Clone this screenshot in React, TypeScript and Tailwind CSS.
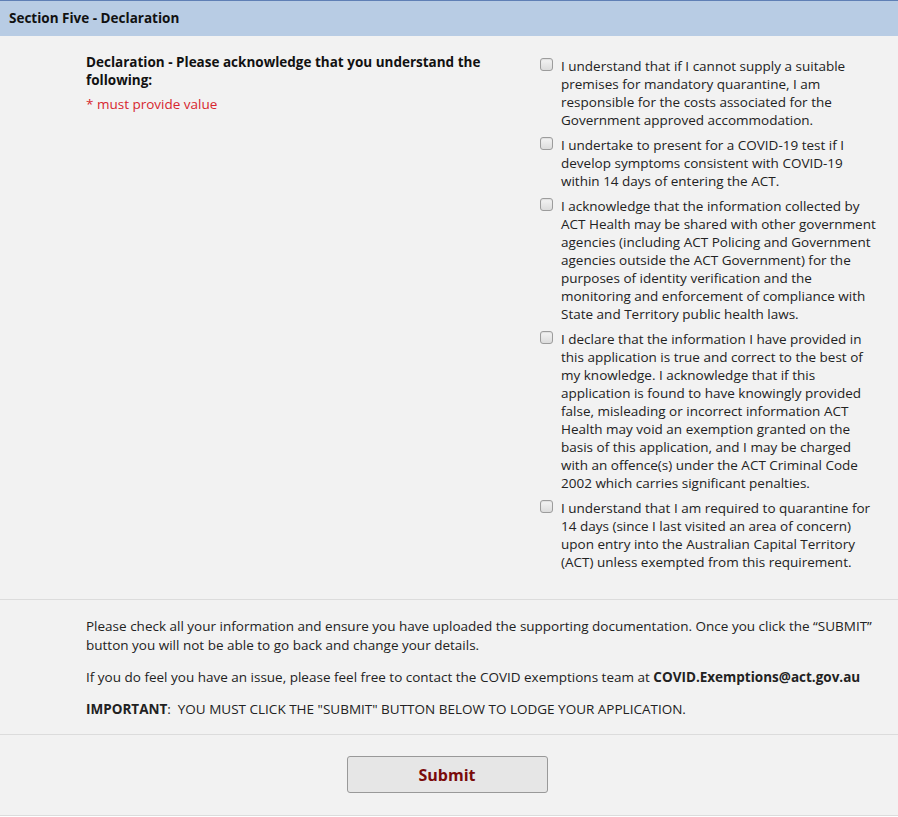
import React from "react";

const items = [
  "I understand that if I cannot supply a suitable premises for mandatory quarantine, I am responsible for the costs associated for the Government approved accommodation.",
  "I undertake to present for a COVID-19 test if I develop symptoms consistent with COVID-19 within 14 days of entering the ACT.",
  "I acknowledge that the information collected by ACT Health may be shared with other government agencies (including ACT Policing and Government agencies outside the ACT Government) for the purposes of identity verification and the monitoring and enforcement of compliance with State and Territory public health laws.",
  "I declare that the information I have provided in this application is true and correct to the best of my knowledge. I acknowledge that if this application is found to have knowingly provided false, misleading or incorrect information ACT Health may void an exemption granted on the basis of this application, and I may be charged with an offence(s) under the ACT Criminal Code 2002 which carries significant penalties.",
  "I understand that I am required to quarantine for 14 days (since I last visited an area of concern) upon entry into the Australian Capital Territory (ACT) unless exempted from this requirement.",
];

export default function App() {
  return (
    <div className="w-[898px] bg-[#f2f2f2] text-[13.5px] text-[#222] font-['Open_Sans',sans-serif]">
      {/* SECTION HEADER */}
      <div className="h-[36px] border-t border-[#5f7fb5] bg-[#b8cce4] px-[9px] flex items-center font-bold text-[#111]">
        Section Five - Declaration
      </div>

      {/* DECLARATION ROW */}
      <div className="flex pl-[86px] pr-[18px] pt-[17px] pb-[21px]">
        <div className="w-[454px] pr-[20px]">
          <div className="font-bold text-[#111] leading-[18px]">Declaration - Please acknowledge that you understand the following:</div>
          <div className="text-[#d7262e] leading-[18px] mt-[6px]">* must provide value</div>
        </div>
        <div className="flex-1 pt-[4px]">
          {items.map((text, i) => (
            <label key={i} className="flex items-start mb-[7px]">
              <input
                type="checkbox"
                className="appearance-none shrink-0 w-[13px] h-[13px] mt-[1px] rounded-[3px] border border-[#9c9c9c] bg-gradient-to-b from-[#f4f4f4] to-[#dcdcdc] shadow-[inset_0_1px_1px_rgba(0,0,0,0.08)]"
              />
              <span className="ml-[8px] leading-[18px]">{text}</span>
            </label>
          ))}
        </div>
      </div>

      {/* NOTES */}
      <div className="border-t border-[#dcdcdc] pl-[86px] pr-[18px] pt-[17px] pb-[15px] leading-[19px]">
        <p className="mb-[13px]">
          Please check all your information and ensure you have uploaded the supporting documentation. Once you click the “SUBMIT” button you will not be able to go back and change your details.
        </p>
        <p className="mb-[13px]">
          If you do feel you have an issue, please feel free to contact the COVID exemptions team at <b>COVID.Exemptions@act.gov.au</b>
        </p>
        <p>
          <b>IMPORTANT</b>:&nbsp; YOU MUST CLICK THE "SUBMIT" BUTTON BELOW TO LODGE YOUR APPLICATION.
        </p>
      </div>

      {/* SUBMIT */}
      <div className="border-t border-b border-[#dcdcdc] flex justify-center pr-[4px] pt-[21px] pb-[22px]">
        <button className="w-[201px] h-[37px] bg-[#e6e6e6] border border-[#999] rounded-[3px] font-bold text-[16px] text-[#7a0b0b]">
          Submit
        </button>
      </div>
    </div>
  );
}
